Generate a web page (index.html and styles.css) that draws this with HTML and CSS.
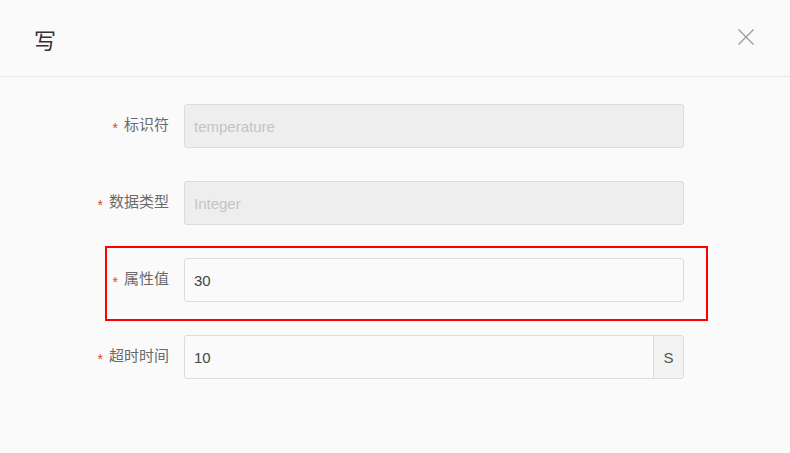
FILE: index.html
```html
<!DOCTYPE html>
<html lang="zh">
<head>
<meta charset="utf-8">
<title>写</title>
<link rel="stylesheet" href="styles.css">
</head>
<body>
<div class="dialog">
  <div class="header">
    <div class="title">写</div>
    <button class="close" aria-label="关闭">
      <svg width="16" height="16" viewBox="0 0 16 16"><path d="M0.5 0.5L15.5 15.5M15.5 0.5L0.5 15.5" stroke="#9a9a9a" stroke-width="1.3" fill="none"/></svg>
    </button>
  </div>
  <form class="form">
    <div class="item">
      <label class="label"><span class="req">*</span>标识符</label>
      <div class="field disabled"><span class="value">temperature</span></div>
    </div>
    <div class="item">
      <label class="label"><span class="req">*</span>数据类型</label>
      <div class="field disabled"><span class="value">Integer</span></div>
    </div>
    <div class="item highlighted">
      <label class="label"><span class="req">*</span>属性值</label>
      <div class="field"><span class="value">30</span></div>
      <div class="mark"></div>
    </div>
    <div class="item">
      <label class="label"><span class="req">*</span>超时时间</label>
      <div class="field group"><span class="value">10</span><span class="addon">S</span></div>
    </div>
  </form>
</div>
</body>
</html>
```
FILE: styles.css
```css
html, body {
  margin: 0;
  padding: 0;
  background: #fafafa;
}
body {
  font-family: "Liberation Sans", "Noto Sans CJK SC", sans-serif;
  width: 790px;
  height: 453px;
  overflow: hidden;
}
.header {
  height: 76px;
  border-bottom: 1px solid #e6e6e6;
  display: flex;
  align-items: center;
  justify-content: space-between;
  padding: 0 36px 0 34px;
}
.title {
  font-family: "Noto Sans CJK SC", sans-serif;
  font-size: 22px;
  color: #333;
  line-height: 1;
  margin-top: 1px;
}
.close {
  border: 0;
  background: none;
  padding: 0;
  width: 16px;
  height: 16px;
  display: flex;
  margin-top: -2px;
}
.form {
  padding-top: 27px;
  display: flex;
  flex-direction: column;
  gap: 33px;
}
.item {
  display: flex;
  align-items: center;
  position: relative;
  width: 684px;
}
.label {
  flex: 0 0 184px;
  padding-right: 15px;
  box-sizing: border-box;
  text-align: right;
  font-family: "Noto Sans CJK SC", sans-serif;
  font-size: 15px;
  color: #6a6a6a;
  line-height: 20px;
}
.req {
  color: #e5432b;
  font-family: "Liberation Sans", sans-serif;
  font-size: 14px;
  margin-right: 6px;
  vertical-align: -3px;
}
.field {
  flex: 0 0 500px;
  height: 44px;
  box-sizing: border-box;
  border: 1px solid #dcdcdc;
  border-radius: 3px;
  display: flex;
  align-items: center;
  font-size: 15px;
  color: #444;
}
.value {
  padding-left: 9px;
  flex: 1;
}
.field.disabled {
  background: #eeeeee;
  color: #c4c4c4;
}
.addon {
  width: 29px;
  align-self: stretch;
  display: flex;
  align-items: center;
  justify-content: center;
  background: #f3f3f3;
  border-left: 1px solid #dcdcdc;
  border-radius: 0 3px 3px 0;
  color: #555;
}
.mark {
  position: absolute;
  left: 105px;
  top: -12px;
  right: -24px;
  bottom: -19px;
  border: 2px solid #ff0000;
  pointer-events: none;
}
```
